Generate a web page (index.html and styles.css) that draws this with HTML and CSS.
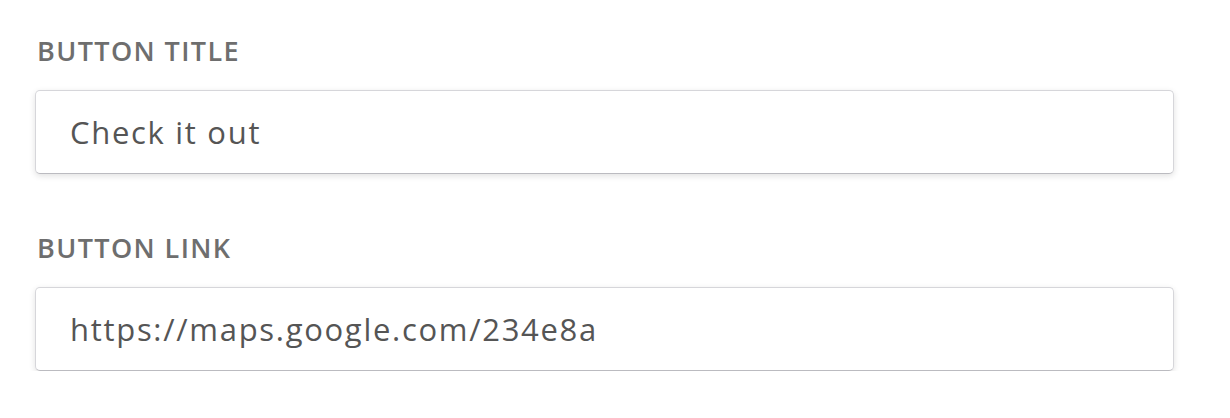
FILE: index.html
```html
<!DOCTYPE html>
<html lang="en">
<head>
    <meta charset="UTF-8">
    <title>Button settings</title>
    <link rel="stylesheet" href="styles.css">
</head>
<body>
    <form class="settings">
        <div class="field">
            <label class="field-label" for="buttonTitle">Button title</label>
            <input class="field-input" id="buttonTitle" type="text" value="Check it out">
        </div>
        <div class="field">
            <label class="field-label" for="buttonLink">Button link</label>
            <input class="field-input" id="buttonLink" type="text" value="https://maps.google.com/234e8a">
        </div>
    </form>
</body>
</html>
```

FILE: styles.css
```css
body {
    margin: 0;
    padding: 0;
    background-color: #ffffff;
    font-family: "Open Sans", "DejaVu Sans", sans-serif;
}

.settings {
    display: flex;
    flex-direction: column;
    gap: 56px;
    padding: 33px 56px 0 35px;
}

.field {
    display: flex;
    flex-direction: column;
    gap: 21px;
}

.field-label {
    padding-left: 2px;
    color: #6e6e6e;
    font-size: 27px;
    font-weight: 600;
    line-height: 36px;
    letter-spacing: 1.4px;
    text-transform: uppercase;
}

.field-input {
    box-sizing: border-box;
    width: 100%;
    height: 84px;
    margin: 0;
    padding: 0 34px;
    border: 1px solid #d6d6da;
    border-bottom-color: #bbbbc0;
    border-radius: 5px;
    background-color: #ffffff;
    box-shadow: 0 2px 6px rgba(0, 0, 0, 0.12);
    color: #555555;
    font-family: "Open Sans", "DejaVu Sans", sans-serif;
    font-size: 31px;
    letter-spacing: 1.7px;
    outline: none;
}
```
